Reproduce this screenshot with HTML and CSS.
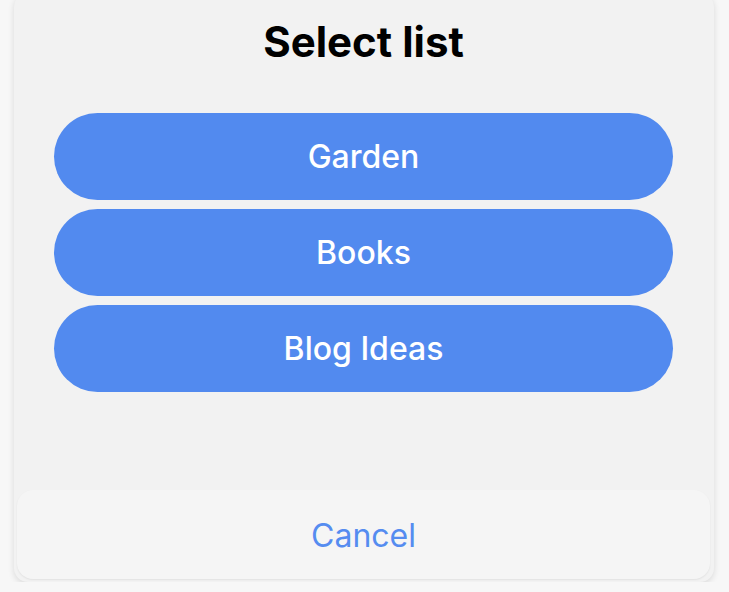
FILE: index.html
```html
<!DOCTYPE html>
<html lang="en">
<head>
  <meta charset="UTF-8">
  <title>Select list</title>
  <link rel="stylesheet" href="styles.css">
</head>
<body>

<div class="sheet">
  <h1 class="sheet-title">Select list</h1>

  <div class="list-options">
    <button class="list-btn">Garden</button>
    <button class="list-btn">Books</button>
    <button class="list-btn">Blog Ideas</button>
  </div>

  <div class="cancel-panel">
    <button class="cancel-btn">Cancel</button>
  </div>
</div>

</body>
</html>
```

FILE: styles.css
```css
html, body {
  margin: 0;
  padding: 0;
  background: #f7f7f7;
  font-family: Inter, 'Liberation Sans', sans-serif;
}

.sheet {
  width: 700px;
  height: 589px;
  margin: -7px 0 0 14px;
  background: #f2f2f2;
  border-radius: 14px;
  box-shadow: 0 2px 6px rgba(0,0,0,0.12);
  display: flex;
  flex-direction: column;
  box-sizing: border-box;
  padding: 0 4px 3px 3px;
}

.sheet-title {
  margin: 0;
  padding-top: 24px;
  height: 90px;
  box-sizing: border-box;
  text-align: center;
  font-size: 42px;
  font-weight: 700;
  line-height: 50px;
  color: #000;
}

.list-options {
  display: flex;
  flex-direction: column;
  gap: 9px;
  padding: 0 37px;
  margin-top: 30px;
}

.list-btn {
  height: 87px;
  border: none;
  border-radius: 44px;
  background: #528aef;
  color: #fff;
  font-family: inherit;
  font-size: 32px;
  font-weight: 500;
  cursor: pointer;
}

.cancel-panel {
  margin-top: auto;
  height: 89px;
  background: #f5f5f5;
  border-radius: 16px;
  box-shadow: 0 1px 2px rgba(0,0,0,0.07);
  display: flex;
}

.cancel-btn {
  flex: 1;
  border: none;
  background: none;
  color: #558cf0;
  font-family: inherit;
  font-size: 32px;
  font-weight: 400;
  padding-top: 2px;
  cursor: pointer;
}
```
